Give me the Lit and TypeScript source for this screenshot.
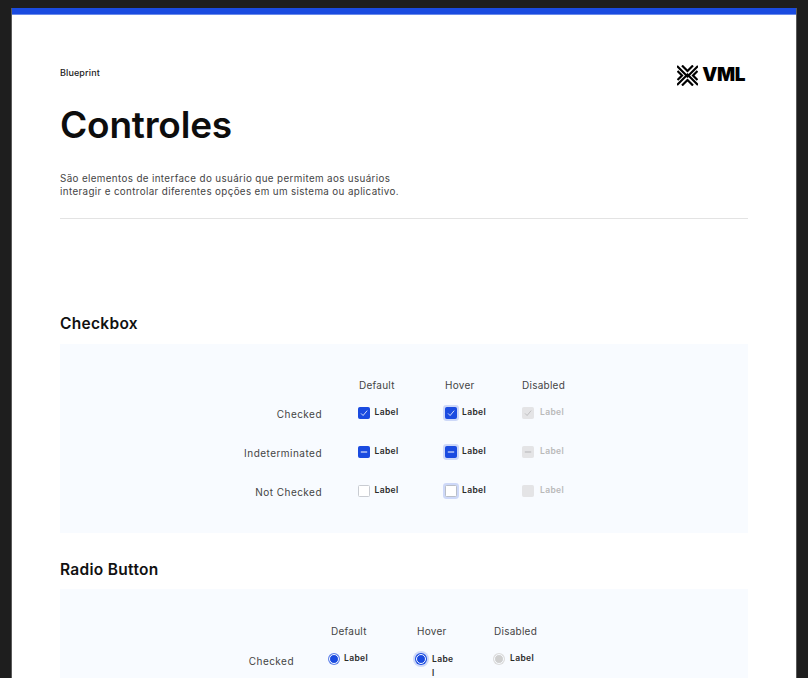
import { LitElement, html, css, svg } from "lit";
import { customElement } from "lit/decorators.js";

const check = svg`<svg viewBox="0 0 12 12" width="12" height="12" class="glyph"><path d="M3 6.4 5.1 8.5 9.2 3.6" fill="none" stroke="currentColor" stroke-width="0.8"/></svg>`;
const dash = svg`<svg viewBox="0 0 12 12" width="12" height="12" class="glyph"><path d="M2.8 6H9.2" fill="none" stroke="currentColor" stroke-width="1"/></svg>`;

type Mark = "checked" | "ind" | "none";

@customElement("app-root")
export class AppRoot extends LitElement {
  static styles = css`
    :host { display: block; width: 808px; height: 678px; overflow: hidden; background: #1e1e1e; font-family: "Inter", "Liberation Sans", sans-serif; color: #111; }
    .frame { margin: 8px 12px 0; background: #fff; border-top: 6px solid #1a4be0; padding: 0 48px; height: 900px; box-sizing: border-box; box-shadow: inset 0 1px 0 #6a8aea, -1px 0 0 #5a5a5a, 1px 0 0 #5a5a5a; }
    .top { display: flex; justify-content: space-between; align-items: flex-start; padding-top: 53px; height: 75px; box-sizing: border-box; }
    .bp { font-size: 9px; font-weight: 500; line-height: 12px; color: #222; letter-spacing: 0.12px; }
    .logo { display: flex; align-items: center; gap: 4px; margin-right: 3px; margin-top: -3px; }
    .logo b { font-size: 19px; font-weight: 900; line-height: 22px; letter-spacing: -0.4px; color: #000; }
    h1 { margin: 14px 0 0; font-size: 37px; line-height: 44px; font-weight: 600; color: #0d0d0d; letter-spacing: -0.2px; }
    .desc { margin: 25px 0 0; font-size: 9.8px; line-height: 13px; color: #444; letter-spacing: 0.37px; }
    hr { border: 0; border-top: 1px solid #e3e3e3; margin: 20px 0 0; }
    h2 { margin: 0; font-size: 15.5px; line-height: 20px; font-weight: 600; color: #111; letter-spacing: 0.3px; }
    .s1 { margin-top: 95px; }
    .s2 { margin-top: 27px; }
    .panel { background: #f8fbff; margin-top: 10px; height: 189px; padding-top: 34px; box-sizing: border-box; display: grid; grid-auto-rows: min-content; align-content: start; }
    .s2 + .panel { margin-top: 9px; padding-top: 35px; }
    .row { display: grid; align-items: center; height: 39.3px; }
    .row.head { height: 13px; margin-bottom: 2px; }
    .c1 { grid-template-columns: 262px 86.5px 77.5px 1fr; }
    .c2 { grid-template-columns: 234px 87px 78px 1fr; }
    .row.head.c1 { grid-template-columns: 262px 86px 77px 1fr; }
    .row.head.c2 { grid-template-columns: 234px 86px 77px 1fr; }
    .rowlabel { text-align: right; font-size: 10px; color: #444; letter-spacing: 0.47px; white-space: nowrap; margin-top: 2px; }
    .cell { display: flex; align-items: center; gap: 4.5px; margin-left: 36px; }
    .cell.hov { gap: 5.5px; }
    .cell.dis { gap: 6px; }
    .hd { margin-left: 36px; padding-left: 1px; font-size: 10px; color: #444; letter-spacing: 0.25px; }
    .lbl { font-size: 8.5px; font-weight: 600; color: #2a2a2a; letter-spacing: 0.35px; line-height: 11px; margin-top: -1px; }
    .dis .lbl { color: #b9b9b9; }
    .box { width: 10px; height: 10px; border: 1px solid #c9ccd2; border-radius: 1.5px; background: #fff; flex: none; display: flex; align-items: center; justify-content: center; color: #fff; }
    .box.on { background: #1a4be0; border-color: #1a4be0; }
    .hov .box { box-shadow: 0 0 0 2px #cdd8f8; border-color: #b9bec8; }
    .hov .box.on { border-color: #1a4be0; }
    .dis .box { background: #e4e4e6; border-color: #e4e4e6; color: #b5b5b8; }
    .glyph { display: block; flex: none; }
    .radio { width: 8px; height: 8px; flex: none; border-radius: 50%; background: #1a4be0; border: 1px solid #f8fbff; box-shadow: 0 0 0 1px #5f82ea; margin-top: 1px; }
    .hov .radio { box-shadow: 0 0 0 1px #1a4be0, 0 0 0 3px #cdd8f8; }
    .dis .radio { background: #cfcfcf; box-shadow: 0 0 0 1px #dcdcdc; }
    .rcell { display: flex; align-items: flex-start; gap: 5px; margin-left: 35px; height: 14px; }
    .rcell.hov, .rcell.dis { gap: 6px; }
    .rcell .lbl { margin-top: 0; }
    .rcell.dis .lbl { color: #2a2a2a; }
    .rcell .narrow { width: 22.5px; word-break: break-all; line-height: 14px; margin-top: -1px; }
    .rradio { margin-top: 1px; }
  `;

  private cell(mark: Mark, state: string) {
    return html`<div class="cell ${state}">
      <span class="box ${mark === "none" ? "" : "on"}">${mark === "checked" ? check : mark === "ind" ? dash : ""}</span>
      <span class="lbl">Label</span>
    </div>`;
  }

  private chkRow(label: string, mark: Mark) {
    return html`<div class="row c1">
      <div class="rowlabel">${label}</div>
      ${this.cell(mark, "def")}${this.cell(mark, "hov")}${this.cell(mark, "dis")}
    </div>`;
  }

  private head(cls: string) {
    return html`<div class="row head ${cls}"><div></div>
      <div class="hd">Default</div><div class="hd">Hover</div><div class="hd">Disabled</div>
    </div>`;
  }

  render() {
    return html`<div class="frame">
      <div class="top">
        <div class="bp">Blueprint</div>
        <div class="logo">
          <svg width="21" height="21" viewBox="0 0 21 21" aria-hidden="true">
            <g fill="none" stroke="#000" stroke-width="2.2">
              <path d="M0 1 10.5 11.5 21 1M0 20 10.5 9.5 21 20"/>
              <path d="M5 0.5 10.5 6 16 0.5M5 20.5 10.5 15 16 20.5"/>
              <path d="M0.5 6 5 10.5 0.5 15M20.5 6 16 10.5 20.5 15"/>
            </g>
          </svg>
          <b>VML</b>
        </div>
      </div>
      <h1>Controles</h1>
      <p class="desc">São elementos de interface do usuário que permitem aos usuários<br />interagir e controlar diferentes opções em um sistema ou aplicativo.</p>
      <hr />
      <h2 class="s1">Checkbox</h2>
      <div class="panel">
        ${this.head("c1")}
        ${this.chkRow("Checked", "checked")}
        ${this.chkRow("Indeterminated", "ind")}
        ${this.chkRow("Not Checked", "none")}
      </div>
      <h2 class="s2">Radio Button</h2>
      <div class="panel">
        ${this.head("c2")}
        <div class="row c2 rradio">
          <div class="rowlabel">Checked</div>
          <div class="rcell def"><span class="radio"></span><span class="lbl">Label</span></div>
          <div class="rcell hov"><span class="radio"></span><span class="lbl narrow">Label</span></div>
          <div class="rcell dis"><span class="radio"></span><span class="lbl">Label</span></div>
        </div>
      </div>
    </div>`;
  }
}
